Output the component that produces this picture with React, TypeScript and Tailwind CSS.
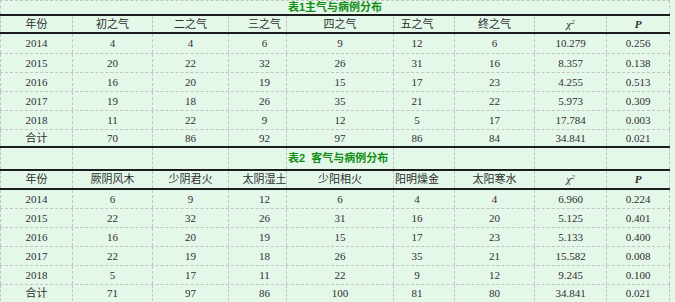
import React from 'react';

const grid = 'grid grid-cols-[72px_80px_76px_58px_107px_61px_80px_72px_64px]';
const line = 'border-dashed border-[#c4c4c4]';

const t1Head = ['年份', '初之气', '二之气', '三之气', '四之气', '五之气', '终之气'];
const t1Rows = [
  ['2014', '4', '4', '6', '9', '12', '6', '10.279', '0.256'],
  ['2015', '20', '22', '32', '26', '31', '16', '8.357', '0.138'],
  ['2016', '16', '20', '19', '15', '17', '23', '4.255', '0.513'],
  ['2017', '19', '18', '26', '35', '21', '22', '5.973', '0.309'],
  ['2018', '11', '22', '9', '12', '5', '17', '17.784', '0.003'],
  ['合计', '70', '86', '92', '97', '86', '84', '34.841', '0.021'],
];

const t2Head = ['年份', '厥阴风木', '少阴君火', '太阴湿土', '少阳相火', '阳明燥金', '太阳寒水'];
const t2Rows = [
  ['2014', '6', '9', '12', '6', '4', '4', '6.960', '0.224'],
  ['2015', '22', '32', '26', '31', '16', '20', '5.125', '0.401'],
  ['2016', '16', '20', '19', '15', '17', '23', '5.133', '0.400'],
  ['2017', '22', '19', '18', '26', '35', '21', '15.582', '0.008'],
  ['2018', '5', '17', '11', '22', '9', '12', '9.245', '0.100'],
  ['合计', '71', '97', '86', '100', '81', '80', '34.841', '0.021'],
];

// the 3rd and 5th data columns sit off-centre in the source table
function shift(i: number) {
  if (i === 3) return 'pl-[14px]';
  if (i === 5) return 'pr-[14px]';
  return '';
}

function Cell({ i, children }: { i: number; children?: React.ReactNode }) {
  return (
    <div className={`flex items-center justify-center whitespace-nowrap border-l ${line} ${i === 8 ? 'border-r' : ''} ${shift(i)}`}>
      {children}
    </div>
  );
}

function Thick() {
  return <div className="h-[2px] w-[670px] bg-[#1c1c1c]" />;
}

function HeadRow({ labels, h }: { labels: string[]; h: string }) {
  return (
    <div className={`${grid} ${h}`}>
      {labels.map((l, i) => (
        <Cell key={i} i={i}>{l}</Cell>
      ))}
      <Cell i={7}>
        <i className="font-['Liberation_Serif',serif]">χ<sup className="text-[7px] -top-[4px]">2</sup></i>
      </Cell>
      <Cell i={8}>
        <b className="italic font-['Liberation_Serif',serif]">P</b>
      </Cell>
    </div>
  );
}

function Body({ rows, first }: { rows: string[][]; first: string }) {
  return (
    <>
      {rows.map((r, ri) => {
        const last = ri === rows.length - 1;
        const h = ri === 0 ? first : last ? 'h-[16px]' : 'h-[19px]';
        return (
          <div key={ri} className={`${grid} ${h} ${last ? '' : `border-b ${line}`}`}>
            {r.map((v, i) => (
              <Cell key={i} i={i}>{v}</Cell>
            ))}
          </div>
        );
      })}
    </>
  );
}

export default function App() {
  return (
    <div className="w-[675px] h-[302px] overflow-hidden bg-[#e4f8ea] text-[11px] leading-none text-[#2e2e2e] font-['Liberation_Serif','Noto_Sans_CJK_SC',serif]">
      <div className="w-[670px]">
        {/* 表1 */}
        <div className={`h-[14px] flex items-center justify-center border-t border-l border-r ${line}`}>
          <span className="font-bold text-[#138d13] font-['Liberation_Sans','Noto_Sans_CJK_SC',sans-serif]">表1主气与病例分布</span>
        </div>
        <Thick />
        <HeadRow labels={t1Head} h="h-[16px]" />
        <Thick />
        <Body rows={t1Rows} first="h-[20px]" />
        <Thick />

        {/* 表2 */}
        <div className={`${grid} h-[21px]`}>
          {Array.from({ length: 9 }).map((_, i) =>
            i === 4 ? (
              <div key={i} className={`flex items-center justify-start pl-[1px] border-l ${line} whitespace-nowrap overflow-visible`}>
                <span className="font-bold text-[#138d13] font-['Liberation_Sans','Noto_Sans_CJK_SC',sans-serif]">表2&nbsp; 客气与病例分布</span>
              </div>
            ) : (
              <Cell key={i} i={i} />
            )
          )}
        </div>
        <Thick />
        <HeadRow labels={t2Head} h="h-[17px]" />
        <Thick />
        <Body rows={t2Rows} first="h-[19px]" />
      </div>
    </div>
  );
}
